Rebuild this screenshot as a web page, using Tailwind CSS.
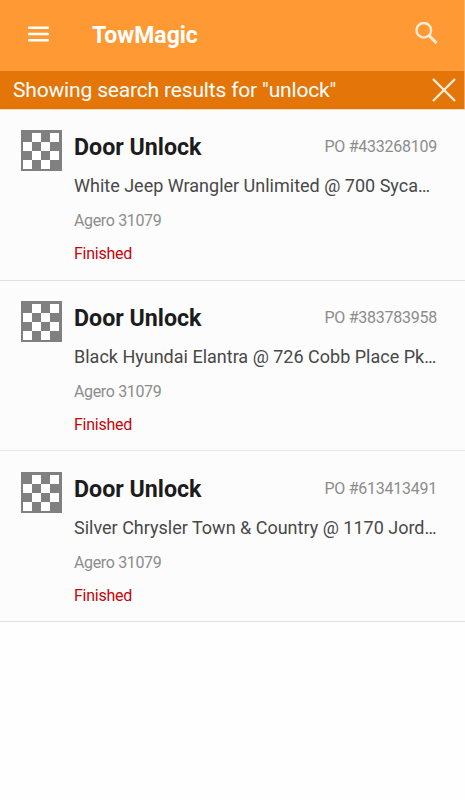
<!DOCTYPE html>
<html lang="en">
<head>
  <meta charset="UTF-8" />
  <title>TowMagic</title>
  <script src="https://cdn.jsdelivr.net/npm/@tailwindcss/browser@4"></script>
</head>
<body class="bg-[#fefefe] font-['Roboto',sans-serif] w-[465px] h-[800px] overflow-hidden">
  <!-- Checkered flag shared by the job rows -->
  <svg class="hidden">
    <symbol id="flag" viewBox="0 0 41 41">
      <rect width="41" height="41" fill="#808080" />
      <path fill="#fff" d="M11 3h9v9h-9zM29 3h9v9h-9zM2 12h9v9h-9zM20 12h9v9h-9zM11 21h9v9h-9zM29 21h9v9h-9zM2 30h9v9h-9zM20 30h9v9h-9z" />
    </symbol>
  </svg>

  <header class="flex items-center h-[71px] pl-7 pr-[26px] pb-1 bg-[#ff9933] text-white border-r border-[#ffb56b]">
    <button><svg class="w-[21px] h-4" viewBox="0 0 21 16" fill="currentColor"><rect y=".5" width="21" height="2.6" rx=".8" /><rect y="6.7" width="21" height="2.6" rx=".8" /><rect y="12.9" width="21" height="2.6" rx=".8" /></svg></button>
    <h1 class="ml-[43px] mt-[5px] text-[23px] leading-7 font-bold">TowMagic</h1>
    <button class="ml-auto"><svg class="w-[23px] h-[23px]" viewBox="0 0 23 23" fill="none" stroke="#ffebd6" stroke-width="2.4"><circle cx="8.8" cy="8.3" r="7.3" /><path stroke-width="3" d="M14.2 13.7l7.4 7.4" /></svg></button>
  </header>

  <div class="flex items-center h-[38px] pl-[13px] pr-2 bg-[#e47609] text-white border-r border-[#efab69]">
    <p class="text-[21px] tracking-[-0.17px] leading-6">Showing search results for "unlock"</p>
    <button class="ml-auto"><svg class="w-6 h-6" viewBox="0 0 24 24" fill="none" stroke="#fdebd8" stroke-width="2.4"><path d="M1 1l22 22M23 1L1 23" /></svg></button>
  </div>

  <main class="border-t border-[#f6dcc0]">
    <div class="flex h-[171px] pt-5 pl-[21px] pr-7 bg-[#fcfcfc] border-b border-[#e0e0e0]">
      <svg class="w-[41px] h-[41px] shrink-0"><use href="#flag" /></svg>
      <div class="ml-3 flex-1 min-w-0">
        <div class="flex items-end justify-between h-[31px]">
          <h2 class="text-[23.2px] leading-7 font-bold text-[#1c1c1c]">Door Unlock</h2>
          <span class="text-[16px] tracking-[-0.25px] leading-7 text-[#8c8c8c]">PO #433268109</span>
        </div>
        <p class="mt-[13px] text-[18px] leading-6 text-[#484848] whitespace-nowrap">White Jeep Wrangler Unlimited @ 700 Syca…</p>
        <p class="mt-[13px] text-[16px] tracking-[-0.35px] leading-5 text-[#8c8c8c]">Agero 31079</p>
        <p class="mt-[13px] text-[16px] tracking-[-0.25px] leading-5 text-[#c4040c]">Finished</p>
      </div>
    </div>

    <div class="flex h-[170px] pt-5 pl-[21px] pr-7 bg-[#fcfcfc] border-b border-[#e8e8e8]">
      <svg class="w-[41px] h-[41px] shrink-0"><use href="#flag" /></svg>
      <div class="ml-3 flex-1 min-w-0">
        <div class="flex items-end justify-between h-[31px]">
          <h2 class="text-[23.2px] leading-7 font-bold text-[#1c1c1c]">Door Unlock</h2>
          <span class="text-[16px] tracking-[-0.25px] leading-7 text-[#8c8c8c]">PO #383783958</span>
        </div>
        <p class="mt-[13px] text-[18px] leading-6 text-[#484848] whitespace-nowrap">Black Hyundai Elantra @ 726 Cobb Place Pk…</p>
        <p class="mt-[13px] text-[16px] tracking-[-0.35px] leading-5 text-[#8c8c8c]">Agero 31079</p>
        <p class="mt-[13px] text-[16px] tracking-[-0.25px] leading-5 text-[#c4040c]">Finished</p>
      </div>
    </div>

    <div class="flex h-[171px] pt-[21px] pl-[21px] pr-7 bg-[#fcfcfc] border-b border-[#e0e0e0]">
      <svg class="w-[41px] h-[41px] shrink-0"><use href="#flag" /></svg>
      <div class="ml-3 flex-1 min-w-0">
        <div class="flex items-end justify-between h-[31px]">
          <h2 class="text-[23.2px] leading-7 font-bold text-[#1c1c1c]">Door Unlock</h2>
          <span class="text-[16px] tracking-[-0.25px] leading-7 text-[#8c8c8c]">PO #613413491</span>
        </div>
        <p class="mt-[13px] text-[18px] leading-6 text-[#484848] whitespace-nowrap">Silver Chrysler Town &amp; Country @ 1170 Jord…</p>
        <p class="mt-[13px] text-[16px] tracking-[-0.35px] leading-5 text-[#8c8c8c]">Agero 31079</p>
        <p class="mt-[13px] text-[16px] tracking-[-0.25px] leading-5 text-[#c4040c]">Finished</p>
      </div>
    </div>
  </main>
</body>
</html>
